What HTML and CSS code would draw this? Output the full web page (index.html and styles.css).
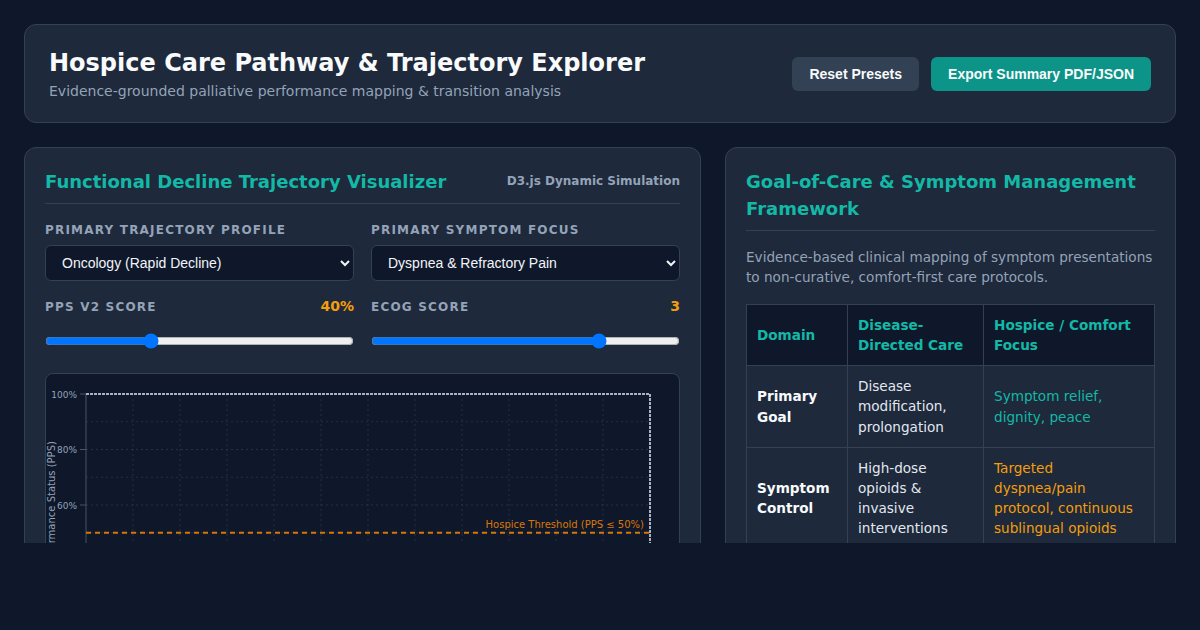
FILE: index.html
```html
<!DOCTYPE html>
<html lang="en">
<head>
<meta charset="utf-8">
<title>Hospice Care Pathway &amp; Trajectory Explorer</title>
<link rel="stylesheet" href="styles.css">
</head>
<body>
<div class="app">
  <header class="topbar">
    <div class="brand">
      <h1>Hospice Care Pathway &amp; Trajectory Explorer</h1>
      <p>Evidence-grounded palliative performance mapping &amp; transition analysis</p>
    </div>
    <div class="actions">
      <button class="btn btn-secondary">Reset Presets</button>
      <button class="btn btn-primary">Export Summary PDF/JSON</button>
    </div>
  </header>

  <main class="grid">
    <section class="panel">
      <div class="panel-head">
        <h2>Functional Decline Trajectory Visualizer</h2>
        <span class="tag">D3.js Dynamic Simulation</span>
      </div>

      <div class="controls">
        <div class="field">
          <div class="field-row"><label class="field-label">Primary Trajectory Profile</label></div>
          <select class="select">
            <option>Oncology (Rapid Decline)</option>
            <option>Organ Failure (Intermittent)</option>
            <option>Frailty / Dementia (Prolonged)</option>
          </select>
        </div>
        <div class="field">
          <div class="field-row"><label class="field-label">Primary Symptom Focus</label></div>
          <select class="select">
            <option>Dyspnea &amp; Refractory Pain</option>
            <option>Delirium &amp; Agitation</option>
            <option>Nausea &amp; Cachexia</option>
          </select>
        </div>
        <div class="field">
          <div class="field-row">
            <label class="field-label">PPS v2 Score</label>
            <span class="field-value">40%</span>
          </div>
          <input class="range" type="range" min="10" max="100" step="10" value="40">
        </div>
        <div class="field">
          <div class="field-row">
            <label class="field-label">ECOG Score</label>
            <span class="field-value">3</span>
          </div>
          <input class="range" type="range" min="0" max="4" step="1" value="3">
        </div>
      </div>

      <div class="chart">
        <svg class="chart-svg" width="633" height="330" viewBox="0 0 633 330">
          <g class="grid-h">
            <line x1="40" x2="604" y1="47.75" y2="47.75"/>
            <line x1="40" x2="604" y1="75.5" y2="75.5"/>
            <line x1="40" x2="604" y1="103.25" y2="103.25"/>
            <line x1="40" x2="604" y1="131" y2="131"/>
            <line x1="40" x2="604" y1="158.75" y2="158.75"/>
            <line x1="40" x2="604" y1="186.5" y2="186.5"/>
            <line x1="40" x2="604" y1="214.25" y2="214.25"/>
            <line x1="40" x2="604" y1="242" y2="242"/>
            <line x1="40" x2="604" y1="269.75" y2="269.75"/>
          </g>
          <g class="grid-v">
            <line x1="87" x2="87" y1="20" y2="297.5"/>
            <line x1="134" x2="134" y1="20" y2="297.5"/>
            <line x1="181" x2="181" y1="20" y2="297.5"/>
            <line x1="228" x2="228" y1="20" y2="297.5"/>
            <line x1="275" x2="275" y1="20" y2="297.5"/>
            <line x1="322" x2="322" y1="20" y2="297.5"/>
            <line x1="369" x2="369" y1="20" y2="297.5"/>
            <line x1="416" x2="416" y1="20" y2="297.5"/>
            <line x1="463" x2="463" y1="20" y2="297.5"/>
            <line x1="510" x2="510" y1="20" y2="297.5"/>
            <line x1="557" x2="557" y1="20" y2="297.5"/>
          </g>
          <g class="axis">
            <line x1="40" x2="40" y1="20" y2="297.5"/>
            <line x1="34" x2="40" y1="20" y2="20"/>
            <line x1="34" x2="40" y1="75.5" y2="75.5"/>
            <line x1="34" x2="40" y1="131" y2="131"/>
            <line x1="34" x2="40" y1="186.5" y2="186.5"/>
            <line x1="34" x2="40" y1="242" y2="242"/>
          </g>
          <g class="ticks">
            <text x="31" y="23.5">100%</text>
            <text x="31" y="79">80%</text>
            <text x="31" y="134.5">60%</text>
            <text x="31" y="190">40%</text>
            <text x="31" y="245.5">20%</text>
          </g>
          <text class="y-label" transform="rotate(-90)" x="-131" y="9">Performance Status (PPS)</text>
          <line class="threshold" x1="40" x2="604" y1="158.75" y2="158.75"/>
          <text class="threshold-label" x="598" y="153.5">Hospice Threshold (PPS ≤ 50%)</text>
          <path class="trajectory" d="M40 20 H604 V300"/>
        </svg>
      </div>
    </section>

    <section class="panel">
      <div class="panel-head">
        <h2>Goal-of-Care &amp; Symptom Management Framework</h2>
      </div>
      <p class="desc">Evidence-based clinical mapping of symptom presentations to non-curative, comfort-first care protocols.</p>
      <table class="care-table">
        <colgroup>
          <col class="col-domain">
          <col class="col-disease">
          <col>
        </colgroup>
        <thead>
          <tr>
            <th>Domain</th>
            <th>Disease-Directed Care</th>
            <th>Hospice / Comfort Focus</th>
          </tr>
        </thead>
        <tbody>
          <tr>
            <td class="domain">Primary Goal</td>
            <td>Disease modification, prolongation</td>
            <td class="comfort">Symptom relief, dignity, peace</td>
          </tr>
          <tr>
            <td class="domain">Symptom Control</td>
            <td>High-dose opioids &amp; invasive interventions</td>
            <td class="warn">Targeted dyspnea/pain protocol, continuous sublingual opioids</td>
          </tr>
          <tr>
            <td class="domain">Setting</td>
            <td>Acute hospital, ICU</td>
            <td class="comfort">Home, residential hospice</td>
          </tr>
        </tbody>
      </table>
    </section>
  </main>
</div>
</body>
</html>
```

FILE: styles.css
```css
* { box-sizing: border-box; }

html, body {
  margin: 0;
  padding: 0;
  background: #0f172a;
  color: #f1f5f9;
  font-family: "DejaVu Sans", "Noto Sans", sans-serif;
}

.app {
  height: 543px;
  overflow: hidden;
  padding: 24px 24px 0;
}

/* Header */
.topbar {
  display: flex;
  align-items: center;
  justify-content: space-between;
  background: #1e293b;
  border: 1px solid #334155;
  border-radius: 12px;
  padding: 24px 24px 21px;
}

.brand h1 {
  margin: 0 0 3px;
  font-size: 24px;
  line-height: 28.8px;
  font-weight: bold;
  color: #f8fafc;
}

.brand p {
  margin: 0;
  font-size: 14px;
  line-height: 20px;
  color: #94a3b8;
}

.actions {
  display: flex;
  gap: 12px;
  margin-top: -2px;
}

.btn {
  height: 34px;
  padding: 0 17px;
  border: none;
  border-radius: 6px;
  font-family: "Liberation Sans", Arial, sans-serif;
  font-size: 14px;
  font-weight: bold;
  color: #f8fafc;
  cursor: pointer;
}

.btn-secondary { background: #334155; }
.btn-primary { background: #0d9488; }

/* Grid */
.grid {
  display: grid;
  grid-template-columns: 3fr 2fr;
  gap: 24px;
  margin-top: 24px;
  align-items: start;
}

.panel {
  background: #1e293b;
  border: 1px solid #334155;
  border-radius: 12px;
  padding: 20px;
}

.panel-head {
  display: flex;
  align-items: center;
  justify-content: space-between;
  padding-bottom: 8px;
  border-bottom: 1px solid #334155;
}

.panel-head h2 {
  margin: 0;
  font-size: 18px;
  line-height: 27px;
  font-weight: bold;
  color: #14b8a6;
}

.tag {
  font-size: 12px;
  font-weight: bold;
  color: #94a3b8;
}

/* Controls */
.controls {
  display: grid;
  grid-template-columns: 1fr 1fr;
  column-gap: 17px;
  row-gap: 17px;
  margin-top: 18px;
}

.field-row {
  display: flex;
  justify-content: space-between;
  align-items: baseline;
  line-height: 16px;
  margin-bottom: 7px;
}

.field-label {
  font-size: 12px;
  font-weight: bold;
  letter-spacing: 1.2px;
  text-transform: uppercase;
  color: #94a3b8;
}

.field-value {
  font-size: 14px;
  font-weight: bold;
  color: #f59e0b;
}

.select {
  display: block;
  width: 100%;
  height: 36px;
  padding: 0 8px 0 12px;
  background-color: #0f172a;
  color: #f1f5f9;
  border: 1px solid #334155;
  border-radius: 6px;
  font-family: "Liberation Sans", Arial, sans-serif;
  font-size: 14px;
  color-scheme: dark;
}

.range {
  display: block;
  width: 100%;
  height: 16px;
  margin: 18px 0 0;
  accent-color: #0075ff;
}

/* Chart */
.chart {
  margin-top: 24px;
  background: #0f172a;
  border: 1px solid #334155;
  border-radius: 8px;
  height: 340px;
  overflow: hidden;
}

.chart-svg {
  display: block;
  font-family: "DejaVu Sans", sans-serif;
}

.grid-h line, .grid-v line {
  stroke: #334155;
  stroke-opacity: 0.6;
  stroke-width: 1;
  stroke-dasharray: 2 3;
}

.axis line {
  stroke: #475569;
  stroke-width: 1;
}

.ticks text {
  font-size: 9px;
  fill: #94a3b8;
  text-anchor: end;
}

.y-label {
  font-size: 10px;
  fill: #94a3b8;
  text-anchor: middle;
}

.threshold {
  stroke: #d97706;
  stroke-width: 2;
  stroke-dasharray: 5 4;
}

.threshold-label {
  font-size: 10px;
  fill: #d97706;
  text-anchor: end;
}

.trajectory {
  fill: none;
  stroke: #e2e8f0;
  stroke-width: 1.5;
  stroke-dasharray: 3 1;
}

/* Framework */
.desc {
  margin: 16px 0 17px;
  font-size: 13.6px;
  line-height: 20px;
  color: #94a3b8;
}

.care-table {
  width: 100%;
  border-collapse: collapse;
  table-layout: fixed;
  font-size: 13.6px;
  line-height: 20.2px;
}

.col-domain { width: 101px; }
.col-disease { width: 136px; }

.care-table th,
.care-table td {
  border: 1px solid #334155;
  padding: 10px;
  text-align: left;
  vertical-align: middle;
}

.care-table th {
  background: #0f172a;
  color: #14b8a6;
  font-weight: bold;
}

.care-table td {
  color: #e2e8f0;
}

.care-table td.domain {
  font-weight: bold;
  color: #f8fafc;
}

.care-table td.comfort { color: #14b8a6; }
.care-table td.warn { color: #f59e0b; }
```
